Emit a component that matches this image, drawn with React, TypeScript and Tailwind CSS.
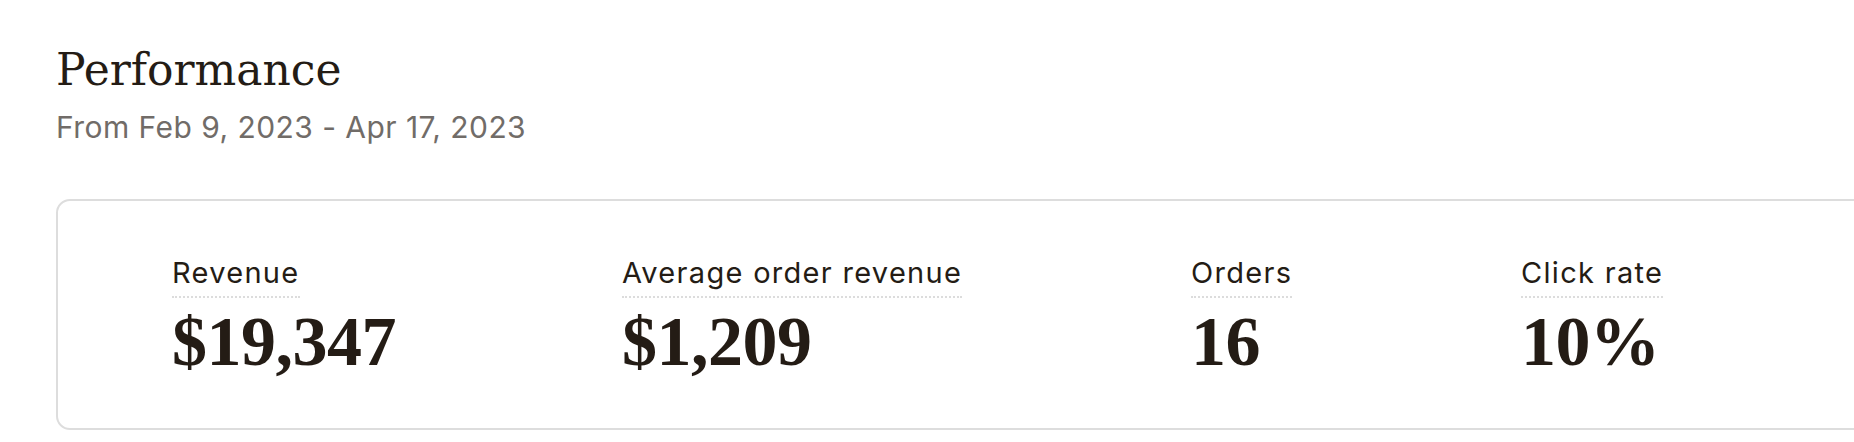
const metrics = [
  { label: "Revenue", value: "$19,347" },
  { label: "Average order revenue", value: "$1,209" },
  { label: "Orders", value: "16" },
  { label: "Click rate", value: "10%" },
];

export default function App() {
  return (
    <div className="h-[442px] w-full overflow-hidden bg-white text-[#241c15]">
      <div className="pl-[56px] pt-[48px]">
        <h1 className="font-['DejaVu_Serif',serif] text-[44px] leading-none font-normal">
          Performance
        </h1>
        <p className="mt-[17px] font-['Inter',sans-serif] text-[30px] leading-[36px] tracking-[0.45px] text-[#716c68]">
          From Feb 9, 2023 - Apr 17, 2023
        </p>

        <div className="mt-[54px] w-[1900px] rounded-[14px] border-2 border-[#dddddd] bg-white">
          <div className="grid grid-cols-[450px_569px_330px_1fr] pl-[114px] pt-[55px] pb-[51px]">
            {metrics.map((m) => (
              <div key={m.label} className="flex flex-col items-start">
                <span className="border-b-2 border-dotted border-[#dcdcdc] pb-[6px] font-['Inter',sans-serif] text-[29px] leading-[34px] tracking-[1.3px]">
                  {m.label}
                </span>
                <span className="mt-[9px] font-['Liberation_Serif',serif] text-[70px] font-bold leading-none tracking-[-0.5px]">
                  {m.value}
                </span>
              </div>
            ))}
          </div>
        </div>
      </div>
    </div>
  );
}
